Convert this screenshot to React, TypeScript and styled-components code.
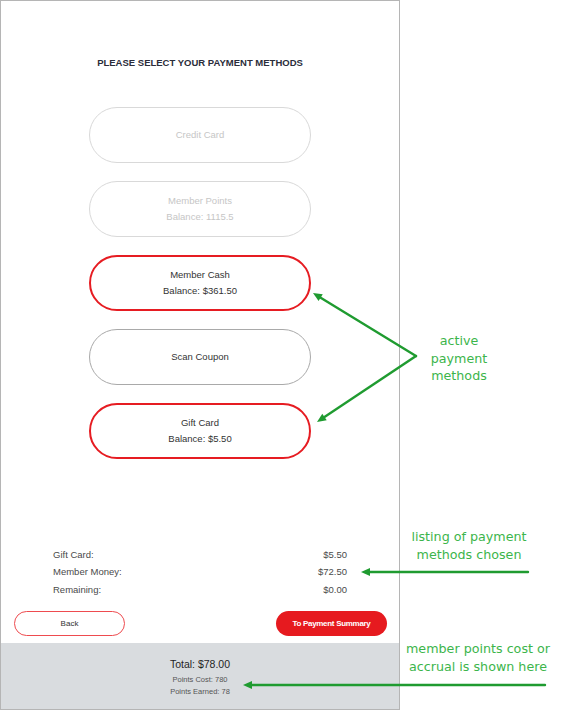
import React from 'react';
import styled, {createGlobalStyle} from 'styled-components';

const GlobalStyle = createGlobalStyle`
  *,
  *::before,
  *::after {
    margin: 0;
    padding: 0;
    box-sizing: border-box;
  }

  html, body {
    width: 100%;
    height: 100%;
    background: #ffffff;
  }

  body {
    font-family: 'Liberation Sans', Arial, sans-serif;
  }
`;

const Page = styled.div`
  position: relative;
  width: 570px;
  height: 710px;
  display: flex;
  background: #ffffff;
`

const Phone = styled.div`
  width: 400px;
  height: 710px;
  border: 1px solid #b5b5b5;
  display: flex;
  flex-direction: column;
  padding-top: 55px;
`

const Title = styled.h1`
  font-size: 9.5px;
  line-height: 14px;
  font-weight: 700;
  color: #2b2d3a;
  text-align: center;
`

const Methods = styled.div`
  margin-top: 37px;
  display: flex;
  flex-direction: column;
  align-items: center;
  gap: 18px;
`

type MethodState = 'disabled' | 'active' | 'idle'

const MethodButton = styled.div<{ $state: MethodState }>`
  width: 222px;
  height: 56px;
  border-radius: 28px;
  display: flex;
  flex-direction: column;
  align-items: center;
  justify-content: center;
  font-size: 9.5px;
  line-height: 16px;
  background: #ffffff;
  color: ${p => p.$state === 'disabled' ? '#c6c6c6' : '#333333'};
  border: ${p => p.$state === 'active'
    ? '2px solid #e61c22'
    : p.$state === 'idle' ? '1px solid #a9a9a9' : '1px solid #d9d9d9'};
`

const Summary = styled.div`
  margin-top: auto;
  padding: 0 52px 0 52px;
  display: flex;
  flex-direction: column;
`

const SummaryRow = styled.div`
  display: flex;
  justify-content: space-between;
  font-size: 9.5px;
  line-height: 17.5px;
  color: #4a4a4a;
`

const Actions = styled.div`
  margin-top: 13px;
  margin-bottom: 7px;
  padding: 0 12px 0 13px;
  display: flex;
  justify-content: space-between;
`

const ActionButton = styled.div<{ $primary?: boolean }>`
  width: 111px;
  height: 25px;
  border-radius: 13px;
  display: flex;
  align-items: center;
  justify-content: center;
  font-size: 8px;
  font-weight: ${p => p.$primary ? 700 : 400};
  letter-spacing: ${p => p.$primary ? '-0.3px' : '0'};
  color: ${p => p.$primary ? '#ffffff' : '#333333'};
  background: ${p => p.$primary ? '#e61a1f' : '#ffffff'};
  border: ${p => p.$primary ? 'none' : '1.5px solid #ee4b4f'};
`

const Footer = styled.div`
  height: 66px;
  background: #d9dcdf;
  padding-top: 10.5px;
  display: flex;
  flex-direction: column;
  align-items: center;
`

const Total = styled.div`
  font-size: 10.5px;
  line-height: 20px;
  color: #1f1f1f;
`

const Points = styled.div`
  font-size: 7.5px;
  line-height: 12.5px;
  color: #555555;
`

// callout layer: sits over the mockup
const Overlay = styled.svg`
  position: absolute;
  left: 0;
  top: 0;
  pointer-events: none;
`

const Note = styled.div<{ $cx: number; $top: number }>`
  position: absolute;
  left: ${p => p.$cx - 90}px;
  top: ${p => p.$top}px;
  width: 180px;
  text-align: center;
  font-family: 'DejaVu Sans', Verdana, sans-serif;
  font-size: 12.7px;
  line-height: 17.5px;
  color: #3cb54b;
`

const ARROW = '#1f9b30'

const Arrow: React.FC<{ x1: number; y1: number; x2: number; y2: number }> = ({x1, y1, x2, y2}) => {
    const a = Math.atan2(y2 - y1, x2 - x1)
    const len = 9
    const w = 4
    const bx = x2 - Math.cos(a) * len
    const by = y2 - Math.sin(a) * len
    const px = -Math.sin(a) * w
    const py = Math.cos(a) * w
    return (
        <g>
            <line x1={x1} y1={y1} x2={bx} y2={by} stroke={ARROW} strokeWidth={2.4} strokeLinecap="round"/>
            <polygon points={`${x2},${y2} ${bx + px},${by + py} ${bx - px},${by - py}`} fill={ARROW}/>
        </g>
    )
}

const methods: { label: string; balance?: string; state: MethodState }[] = [
    {label: 'Credit Card', state: 'disabled'},
    {label: 'Member Points', balance: 'Balance: 1115.5', state: 'disabled'},
    {label: 'Member Cash', balance: 'Balance: $361.50', state: 'active'},
    {label: 'Scan Coupon', state: 'idle'},
    {label: 'Gift Card', balance: 'Balance: $5.50', state: 'active'},
]

const chosen = [
    ['Gift Card:', '$5.50'],
    ['Member Money:', '$72.50'],
    ['Remaining:', '$0.00'],
]

const App: React.FC = () => {
    return (
        <Page>
            <GlobalStyle/>
            <Phone>
                <Title>PLEASE SELECT YOUR PAYMENT METHODS</Title>
                <Methods>
                    {methods.map(m => (
                        <MethodButton key={m.label} $state={m.state}>
                            <span>{m.label}</span>
                            {m.balance && <span>{m.balance}</span>}
                        </MethodButton>
                    ))}
                </Methods>
                <Summary>
                    {chosen.map(([k, v]) => (
                        <SummaryRow key={k}>
                            <span>{k}</span>
                            <span>{v}</span>
                        </SummaryRow>
                    ))}
                </Summary>
                <Actions>
                    <ActionButton>Back</ActionButton>
                    <ActionButton $primary>To Payment Summary</ActionButton>
                </Actions>
                <Footer>
                    <Total>Total: $78.00</Total>
                    <Points>Points Cost: 780</Points>
                    <Points>Points Earned: 78</Points>
                </Footer>
            </Phone>

            <Note $cx={459} $top={332}>active<br/>payment<br/>methods</Note>
            <Note $cx={469} $top={528}>listing of payment<br/>methods chosen</Note>
            <Note $cx={478} $top={640}>member points cost or<br/>accrual is shown here</Note>

            <Overlay width={570} height={710}>
                <Arrow x1={416} y1={356} x2={313} y2={293}/>
                <Arrow x1={416} y1={356} x2={317} y2={422}/>
                <Arrow x1={528} y1={572} x2={361} y2={572}/>
                <Arrow x1={545} y1={685} x2={243} y2={685}/>
            </Overlay>
        </Page>
    );
};

export default App;
